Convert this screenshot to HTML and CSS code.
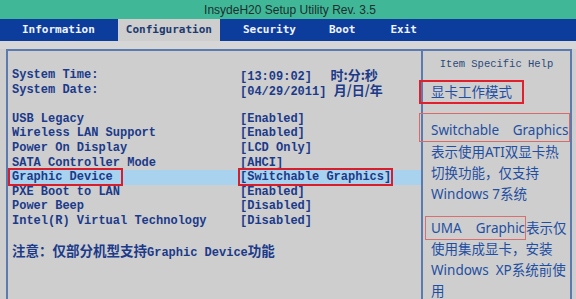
FILE: index.html
```html
<!DOCTYPE html>
<html>
<head>
<meta charset="utf-8">
<link rel="stylesheet" href="styles.css">
</head>
<body>
<div class="title">InsydeH20 Setup Utility Rev. 3.5</div>
<div class="tabs">
  <div class="tab">Information</div>
  <div class="tab active">Configuration</div>
  <div class="tab">Security</div>
  <div class="tab">Boot</div>
  <div class="tab">Exit</div>
</div>
<div class="band"></div>
<div class="frame">
  <div class="left">
    <div class="row"><span>System Time:</span><span>[13:09:02]  <span class="cjk t">时:分:秒</span></span></div>
    <div class="row"><span>System Date:</span><span>[04/29/2011] <span class="cjk">月/日/年</span></span></div>
    <div class="row blank"></div>
    <div class="row"><span>USB Legacy</span><span>[Enabled]</span></div>
    <div class="row"><span>Wireless LAN Support</span><span>[Enabled]</span></div>
    <div class="row"><span>Power On Display</span><span>[LCD Only]</span></div>
    <div class="row"><span>SATA Controller Mode</span><span>[AHCI]</span></div>
    <div class="row selected"><span><span class="mark lbl">Graphic Device</span></span><span><span class="mark val">[Switchable Graphics]</span></span></div>
    <div class="row"><span>PXE Boot to LAN</span><span>[Enabled]</span></div>
    <div class="row"><span>Power Beep</span><span>[Disabled]</span></div>
    <div class="row"><span>Intel(R) Virtual Technology</span><span>[Disabled]</span></div>
    <div class="row blank"></div>
    <div class="note"><span class="cjk">注意：仅部分机型支持</span>Graphic Device<span class="cjk">功能</span></div>
  </div>
  <div class="right">
    <div class="help-head">Item Specific Help</div>
    <div class="help-first"><span class="box-strong">显卡工作模式</span></div>
    <div class="box-block">Switchable Graphics</div>
    <div class="line">表示使用ATI双显卡热</div>
    <div class="line">切换功能，仅支持</div>
    <div class="line">Windows 7系统</div>
    <div class="line gap"><span class="box-thin">UMA&nbsp;&nbsp;&nbsp;&nbsp;Graphic</span>表示仅</div>
    <div class="line">使用集成显卡，安装</div>
    <div class="line">Windows&nbsp;&nbsp;XP系统前使</div>
    <div class="line">用</div>
  </div>
</div>
</body>
</html>
```
FILE: styles.css
```css
html, body {
  margin: 0;
  padding: 0;
  height: 299px;
  overflow: hidden;
  background: #cecece;
}
body {
  display: flex;
  flex-direction: column;
}
.title {
  flex-shrink: 0;
  height: 19px;
  line-height: 20px;
  background: #40b898;
  color: #1c2e2e;
  font-family: "Liberation Sans", Arial, sans-serif;
  font-size: 12px;
  text-align: center;
  padding-left: 4px;
}
.tabs {
  flex-shrink: 0;
  height: 22px;
  background: #0c3d9c;
  display: flex;
  padding-left: 14px;
  gap: 15px;
  font-family: "DejaVu Sans Mono", monospace;
  font-weight: bold;
  font-size: 11px;
}
.tab {
  color: #f0f4ff;
  padding: 0 8px;
  line-height: 21px;
}
.tab.active {
  background: #cecece;
  color: #1c3a70;
}
.tab:nth-child(4) { margin-left: 2px; }
.tab:nth-child(5) { margin-left: 4px; }
.band {
  flex-shrink: 0;
  height: 8px;
  background: #d6d6d6;
}
.frame {
  flex: 1;
  min-height: 0;
  margin-left: 6px;
  width: 562px;
  border: 2px solid #5b7bb0;
  border-bottom: none;
  display: grid;
  grid-template-columns: 413px 1fr;
  background: #cecece;
}
.left {
  padding: 17px 0 0 4px;
  font-family: "Liberation Mono", monospace;
  font-weight: bold;
  font-size: 12px;
  color: #1b3a8a;
}
.row {
  display: grid;
  grid-template-columns: 228px auto;
  line-height: 14.6px;
  height: 14.6px;
}
.row > span {
  white-space: pre;
}
.cjk {
  font-family: "Noto Sans CJK SC", sans-serif;
  font-size: 13px;
  line-height: 14px;
}
.cjk.t {
  margin-left: 4px;
}
.selected {
  background: #a8d2ee;
  margin-left: -4px;
  padding-left: 4px;
}
.mark {
  outline: 2px solid #d81e2a;
}
.mark.lbl {
  padding: 0 8px 0 2px;
  margin-left: -2px;
}
.mark.val {
  padding: 0;
}
.note {
  line-height: 14.6px;
  white-space: nowrap;
}
.note .cjk {
  font-size: 13.5px;
}
.right {
  border-left: 2px solid #5b7bb0;
  padding-left: 8px;
  color: #1f4fa2;
  font-family: "Noto Sans", "Noto Sans CJK SC", sans-serif;
  font-size: 13.5px;
}
.help-head {
  font-family: "Liberation Mono", monospace;
  font-size: 10.5px;
  color: #2a4a7c;
  text-align: center;
  margin-left: -8px;
  padding-top: 5px;
  height: 24px;
  line-height: 16px;
  box-sizing: border-box;
}
.help-first {
  margin-top: 5px;
  margin-left: -12px;
  height: 24px;
}
.box-strong {
  display: inline-block;
  border: 2px solid #e0202c;
  padding: 0 10px;
  line-height: 20px;
}
.box-block {
  margin-top: 9px;
  margin-left: -12px;
  border: 1px solid #d86a6a;
  padding-left: 11px;
  padding-top: 6px;
  line-height: 21px;
  height: 21px;
  word-spacing: 10px;
}
.line {
  line-height: 21px;
  height: 21px;
  white-space: nowrap;
}
.line.gap {
  margin-top: 13px;
}
.box-thin {
  border: 1px solid #d87070;
  padding: 2px 0 2px 5px;
  margin-left: -6px;
}
```
